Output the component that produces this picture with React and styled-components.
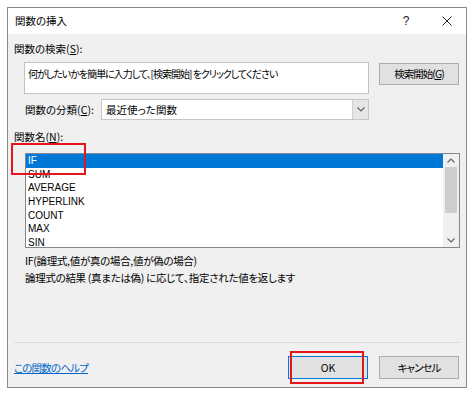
import React from "react";
import styled, { createGlobalStyle } from "styled-components";

const GlobalStyle = createGlobalStyle`
  html, body {
    margin: 0;
    padding: 0;
    background: #ffffff;
  }
  body {
    font-family: "Noto Sans CJK JP", "Noto Sans", sans-serif;
    font-size: 10.5px;
    font-feature-settings: "palt";
    color: #000;
  }
`;

const Page = styled.div`
  padding: 7px 0 0 7px;
`;

const Dialog = styled.div`
  position: relative;
  width: 460px;
  height: 381px;
  box-sizing: border-box;
  border: 1px solid #8a8a8a;
  background: #f0f0f0;
  display: flex;
  flex-direction: column;
`;

const TitleBar = styled.div`
  height: 26px;
  background: #ffffff;
  display: flex;
  align-items: center;
  padding-left: 7px;
`;

const Title = styled.div`
  flex: 1;
  line-height: 16px;
`;

const TitleButton = styled.div`
  width: ${p => p.w}px;
  height: 26px;
  display: flex;
  align-items: center;
  justify-content: center;
  font-family: "Liberation Sans", sans-serif;
  font-size: 12px;
  color: #222;
`;

const Body = styled.div`
  flex: 1;
  display: flex;
  flex-direction: column;
  padding: 7px 6px 8px 6px;
`;

const Label = styled.div`
  line-height: 16px;
  height: 16px;
  margin-top: ${p => p.mt || 0}px;
  white-space: nowrap;
`;

const Key = styled.span`
  text-decoration: underline;
`;

const SearchRow = styled.div`
  margin-top: 5px;
  padding-left: 10px;
  display: flex;
  align-items: flex-start;
  gap: 10px;
`;

const TextBox = styled.div`
  width: 345px;
  height: 32px;
  box-sizing: border-box;
  border: 1px solid #c2c2c2;
  background: #fff;
  padding: 3px 0 0 3px;
  font-size: 10px;
  letter-spacing: -1px;
  line-height: 16px;
  white-space: nowrap;
  overflow: hidden;
`;

const Button = styled.div`
  width: 80px;
  height: ${p => p.h || 23}px;
  box-sizing: border-box;
  margin-top: ${p => p.mt || 0}px;
  border: 1px solid ${p => (p.primary ? "#0078d7" : "#adadad")};
  background: #e1e1e1;
  display: flex;
  align-items: center;
  justify-content: center;
  line-height: 16px;
  letter-spacing: ${p => p.ls || 0}px;
  white-space: nowrap;
`;

const CategoryRow = styled.div`
  margin-top: 5px;
  padding-left: 11px;
  display: flex;
  align-items: center;
`;

const CategoryLabel = styled(Label)`
  width: 76px;
`;

const Select = styled.div`
  width: 268px;
  height: 21px;
  box-sizing: border-box;
  border: 1px solid #c6c6c6;
  background: #fff;
  display: flex;
  align-items: stretch;
`;

const SelectValue = styled.div`
  flex: 1;
  padding-left: 4px;
  line-height: 19px;
`;

const SelectArrow = styled.div`
  width: 15px;
  background: #e6e6e6;
  border-left: 1px solid #cfcfcf;
  display: flex;
  align-items: center;
  justify-content: center;
`;

const ListBox = styled.div`
  margin-top: 8px;
  margin-left: 11px;
  width: 435px;
  height: 95px;
  box-sizing: border-box;
  border: 1px solid #828790;
  background: #fff;
  display: flex;
  overflow: hidden;
`;

const Items = styled.div`
  flex: 1;
`;

const Item = styled.div`
  height: 13.7px;
  line-height: 13.2px;
  padding-left: 2px;
  font-family: "Liberation Sans", sans-serif;
  font-size: 10px;
  background: ${p => (p.selected ? "#0078d7" : "transparent")};
  color: ${p => (p.selected ? "#fff" : "#000")};
`;

const ScrollBar = styled.div`
  width: 16px;
  background: #f0f0f0;
  display: flex;
  flex-direction: column;
`;

const ScrollArrow = styled.div`
  height: 13px;
  display: flex;
  align-items: center;
  justify-content: center;
`;

const ScrollTrack = styled.div`
  flex: 1;
  padding: 0 2px;
`;

const Thumb = styled.div`
  height: 46px;
  background: #cdcdcd;
`;

const Description = styled.div`
  margin-top: 4px;
  padding-left: 11px;
  line-height: 17px;
  letter-spacing: -0.3px;
`;

const Spacer = styled.div`
  flex: 1;
`;

const Separator = styled.div`
  height: 1px;
  background: #dcdcdc;
`;

const Footer = styled.div`
  margin-top: 13px;
  display: flex;
  align-items: center;
  gap: 11px;
  padding-right: 1px;
`;

const HelpLink = styled.a`
  flex: 1;
  color: #0066cc;
  text-decoration: underline;
  line-height: 16px;
  letter-spacing: -0.8px;
  cursor: pointer;
`;

const Marker = styled.div`
  position: absolute;
  left: ${p => p.x}px;
  top: ${p => p.y}px;
  width: ${p => p.w}px;
  height: ${p => p.h}px;
  box-sizing: border-box;
  border: 2px solid #e8141b;
  pointer-events: none;
`;

const Chevron = ({ up }) => (
  <svg width="8" height="5" viewBox="0 0 8 5">
    <polyline
      points={up ? "0.5,4.5 4,1 7.5,4.5" : "0.5,0.5 4,4 7.5,0.5"}
      fill="none"
      stroke="#606060"
      strokeWidth="1.1"
    />
  </svg>
);

const functions = ["IF", "SUM", "AVERAGE", "HYPERLINK", "COUNT", "MAX", "SIN"];

export default function App() {
  return (
    <Page>
      <GlobalStyle />
      <Dialog>
        <TitleBar>
          <Title>関数の挿入</Title>
          <TitleButton w={44}>?</TitleButton>
          <TitleButton w={38}>
            <svg width="10" height="10" viewBox="0 0 10 10">
              <path d="M0.5 0.5 L9.5 9.5 M9.5 0.5 L0.5 9.5" stroke="#222" strokeWidth="1" />
            </svg>
          </TitleButton>
        </TitleBar>

        <Body>
          <Label>
            関数の検索(<Key>S</Key>):
          </Label>
          <SearchRow>
            <TextBox>何がしたいかを簡単に入力して、[検索開始] をクリックしてください</TextBox>
            <Button h={22} mt={1} ls={-1}>
              検索開始(<Key>G</Key>)
            </Button>
          </SearchRow>

          <CategoryRow>
            <CategoryLabel>
              関数の分類(<Key>C</Key>):
            </CategoryLabel>
            <Select>
              <SelectValue>最近使った関数</SelectValue>
              <SelectArrow>
                <Chevron />
              </SelectArrow>
            </Select>
          </CategoryRow>

          <Label mt={9}>
            関数名(<Key>N</Key>):
          </Label>
          <ListBox>
            <Items>
              {functions.map((f, i) => (
                <Item key={f} selected={i === 0}>
                  {f}
                </Item>
              ))}
            </Items>
            <ScrollBar>
              <ScrollArrow>
                <Chevron up />
              </ScrollArrow>
              <ScrollTrack>
                <Thumb />
              </ScrollTrack>
              <ScrollArrow>
                <Chevron />
              </ScrollArrow>
            </ScrollBar>
          </ListBox>

          <Description>
            <div>IF(論理式,値が真の場合,値が偽の場合)</div>
            <div>論理式の結果 (真または偽) に応じて、指定された値を返します</div>
          </Description>

          <Spacer />
          <Separator />
          <Footer>
            <HelpLink>この関数のヘルプ</HelpLink>
            <Button primary>OK</Button>
            <Button ls={-1}>キャンセル</Button>
          </Footer>
        </Body>

        <Marker x={3} y={135} w={75} h={32} />
        <Marker x={282} y={343} w={74} h={33} />
      </Dialog>
    </Page>
  );
}
